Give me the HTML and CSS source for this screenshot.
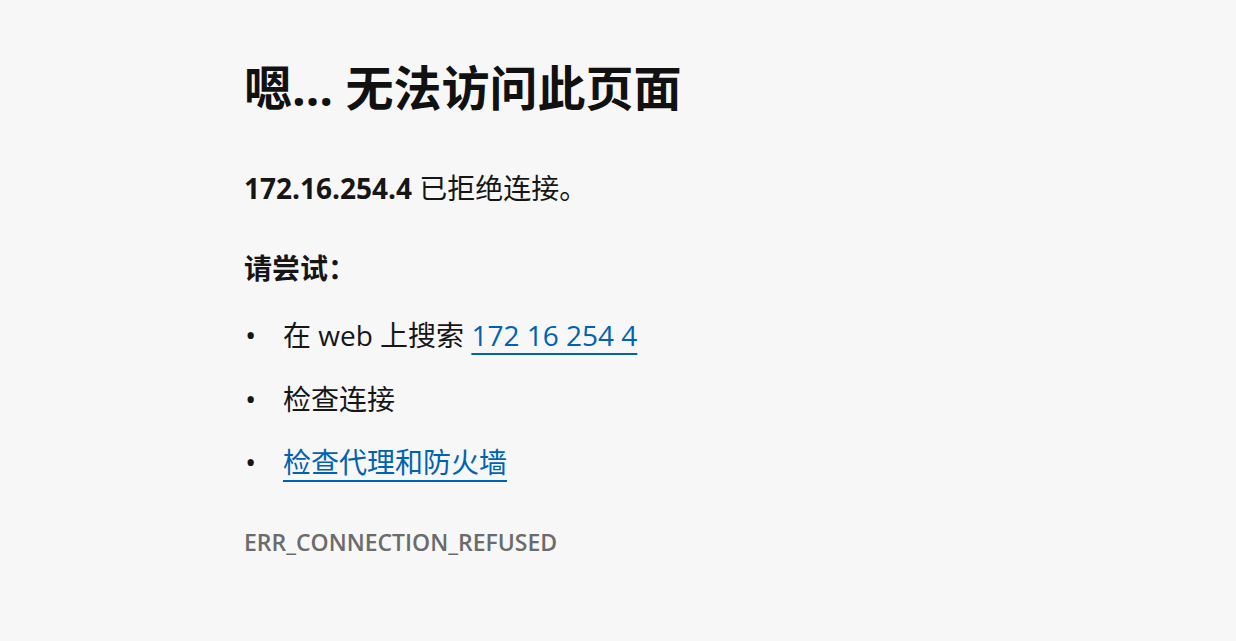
FILE: index.html
```html
<!DOCTYPE html>
<html lang="zh-CN">
<head>
<meta charset="utf-8">
<title>无法访问此页面</title>
<link rel="stylesheet" href="styles.css">
</head>
<body>
<main class="page">
  <h1 class="title">嗯… 无法访问此页面</h1>
  <p class="summary"><strong>172.16.254.4</strong> 已拒绝连接。</p>
  <h2 class="try">请尝试：</h2>
  <ul class="suggestions">
    <li><span class="item">在 web 上搜索 <a href="#" class="link">172 16 254 4</a></span></li>
    <li><span class="item">检查连接</span></li>
    <li><span class="item"><a href="#" class="link">检查代理和防火墙</a></span></li>
  </ul>
  <div class="code">ERR_CONNECTION_REFUSED</div>
</main>
</body>
</html>
```
FILE: styles.css
```css
html, body {
  margin: 0;
  padding: 0;
  background: #f7f7f7;
}
body {
  font-family: "Open Sans", "Noto Sans CJK SC", sans-serif;
  color: #161616;
}
.page {
  padding: 52px 0 0 244px;
}
.title {
  margin: 0;
  font-size: 48px;
  font-weight: 700;
  line-height: 72px;
  color: #111;
}
.summary {
  margin: 44px 0 0;
  font-size: 28px;
  line-height: 40px;
}
.summary strong { font-weight: 700; }
.try {
  margin: 40px 0 0;
  font-size: 28px;
  font-weight: 700;
  line-height: 40px;
}
.suggestions {
  margin: 27px 0 0;
  padding: 0;
  list-style: none;
  font-size: 28px;
  line-height: 40px;
}
.suggestions li {
  display: flex;
  align-items: baseline;
  height: 40px;
  margin-bottom: 23.5px;
}
.suggestions li:last-child {
  margin-bottom: 0;
}
.suggestions li::before {
  content: "•";
  flex: 0 0 39px;
  padding-left: 1px;
  box-sizing: border-box;
  font-size: 30px;
  line-height: 40px;
}
.item {
  white-space: pre;
}
.link {
  color: #0063b1;
  text-decoration: underline;
  text-decoration-thickness: 2px;
  text-underline-offset: 7px;
}
.code {
  margin-top: 45px;
  font-size: 23px;
  font-weight: 600;
  color: #6b6b6b;
  line-height: 30px;
}
```
